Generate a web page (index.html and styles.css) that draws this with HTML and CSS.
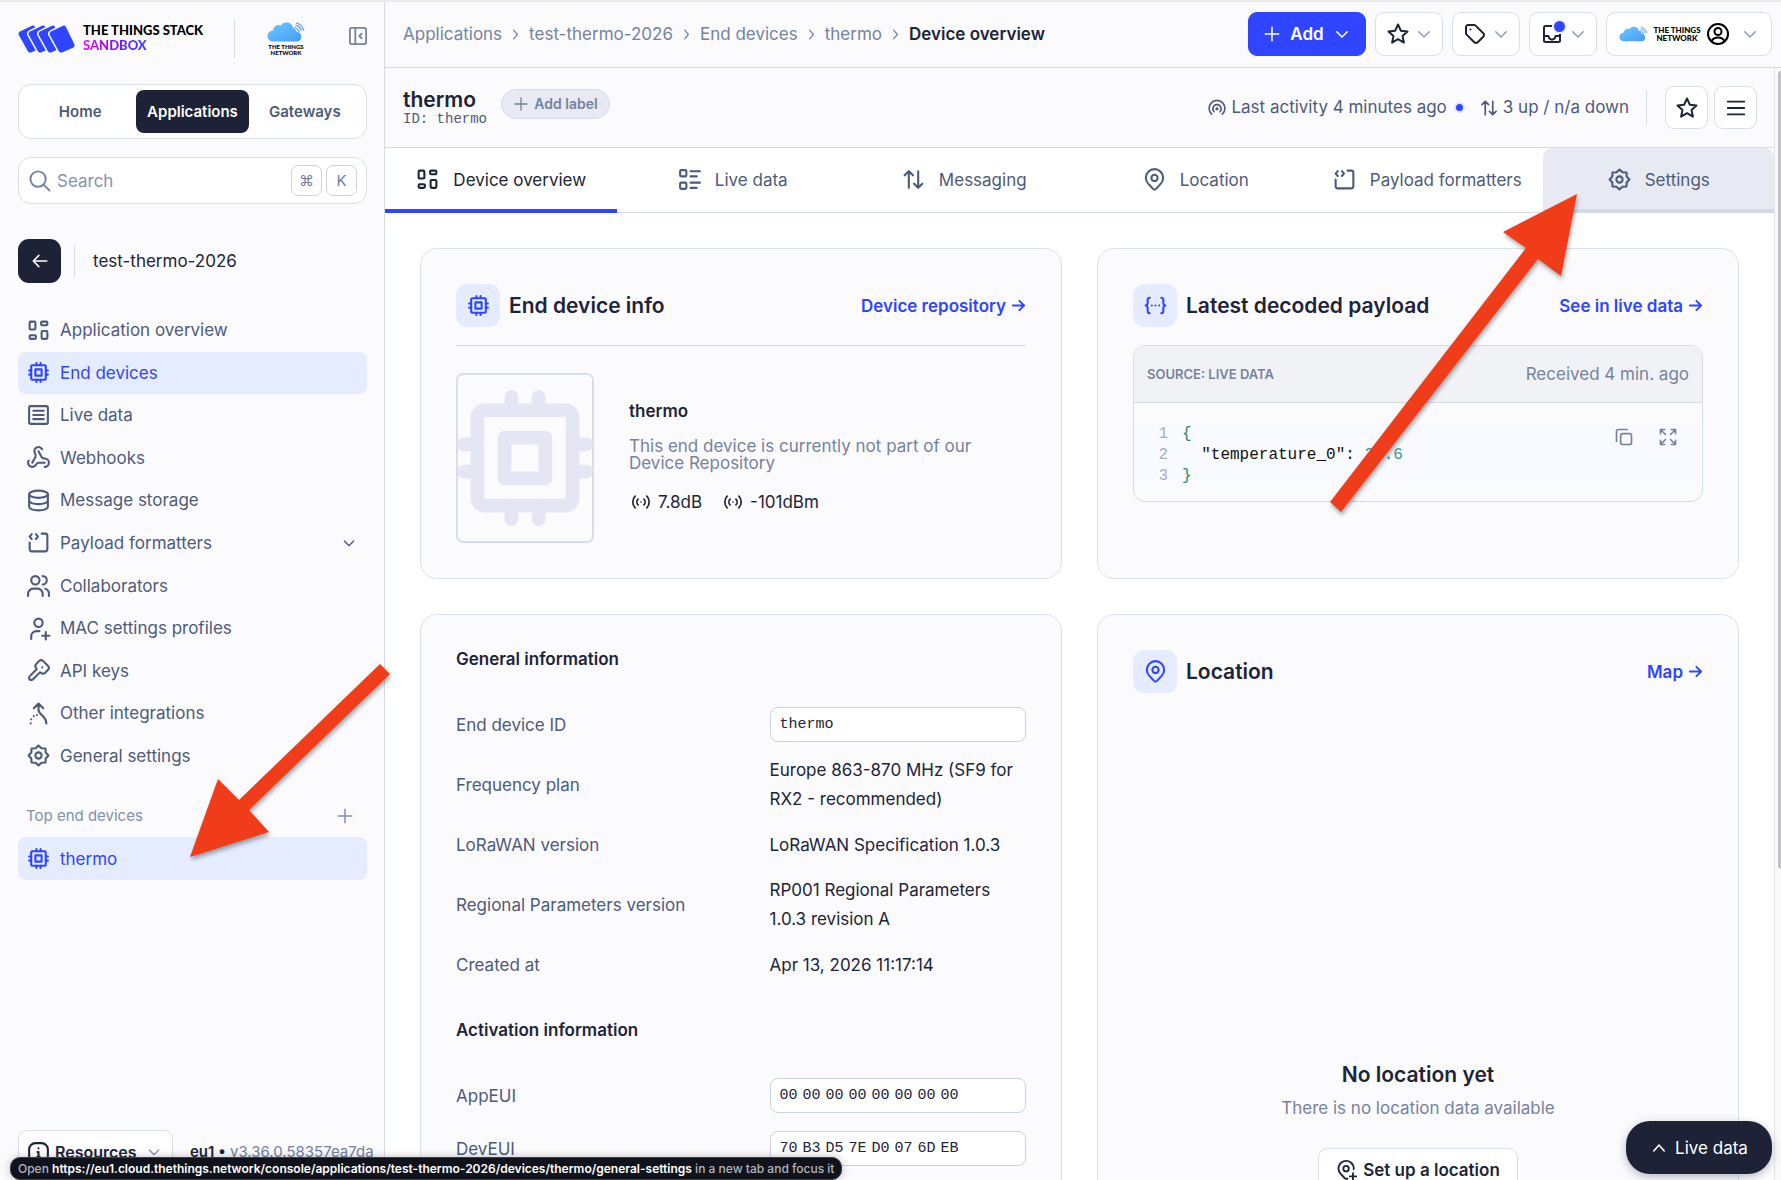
FILE: index.html
```html
<!DOCTYPE html>
<html lang="en">
<head>
    <meta charset="UTF-8">
    <meta name="viewport" content="width=device-width, initial-scale=1.0">
    <title>Device overview - thermo - The Things Stack Sandbox</title>
    <link rel="stylesheet" href="styles.css">
</head>
<body>
    <!-- Icon set -->
    <svg class="sprite" aria-hidden="true">
        <symbol id="i-overview" viewBox="0 0 24 24"><rect x="3.500" y="3.500" width="5.500" height="7.500" rx="1"/><rect x="14.500" y="3.500" width="6" height="3.500" rx="1"/><rect x="3.500" y="16.500" width="6" height="3.500" rx="1"/><rect x="15" y="12.500" width="5.500" height="7.500" rx="1"/></symbol>
        <symbol id="i-chip" viewBox="0 0 24 24"><rect x="5" y="5" width="14" height="14" rx="1"/><rect x="9" y="9" width="6" height="6"/><path d="M10 3v2M14 3v2M10 19v2M14 19v2M3 10h2M3 14h2M19 10h2M19 14h2"/></symbol>
        <symbol id="i-list" viewBox="0 0 24 24"><rect x="3" y="3" width="18" height="17" rx="1.5"/><path d="M7 7.500h10M7 11.500h10M7 15.500h10"/></symbol>
        <symbol id="i-webhook" viewBox="0 0 24 24"><path d="M18 16.980h-5.990c-1.100 0-1.950.940-2.480 1.900A4 4 0 0 1 2 17c.010-.700.200-1.400.570-2"/><path d="m6 17 3.130-5.780c.530-.970.100-2.180-.500-3.100a4 4 0 1 1 6.890-4.060"/><path d="m12 6 3.130 5.730C15.660 12.700 16.900 13 18 13a4 4 0 0 1 0 8"/></symbol>
        <symbol id="i-database" viewBox="0 0 24 24"><ellipse cx="12" cy="6" rx="9" ry="3.500"/><path d="M3 6v12c0 2 4 3.500 9 3.500s9-1.500 9-3.500V6M3 12c0 2 4 3.500 9 3.500s9-1.500 9-3.500"/></symbol>
        <symbol id="i-source" viewBox="0 0 24 24"><path d="M15 3.500h3.500a2 2 0 0 1 2 2v13a2 2 0 0 1-2 2h-13a2 2 0 0 1-2-2V12"/><path d="M5.500 4L3.500 6.300l2 2.300M9.500 4l2 2.300-2 2.300"/></symbol>
        <symbol id="i-users" viewBox="0 0 24 24"><circle cx="9" cy="7" r="4"/><path d="M2 22v-2a5 5 0 0 1 5-5h4a5 5 0 0 1 5 5v2M16 3a4 4 0 0 1 0 8M22 22v-2a5 5 0 0 0-3.500-4.800"/></symbol>
        <symbol id="i-user-plus" viewBox="0 0 24 24"><circle cx="12" cy="6.500" r="4"/><path d="M5 22v-2.500a5 5 0 0 1 5-5h3M19 15.500v7M15.500 19h7"/></symbol>
        <symbol id="i-key" viewBox="0 0 24 24"><path d="M16.600 3l4.400 4.400a2.900 2.900 0 0 1 0 4.100l-2.600 2.600a2.900 2.900 0 0 1-4.100 0l-.9-.3-6.600 6.600a2 2 0 0 1-1.400.6H4a1 1 0 0 1-1-1v-1.200a2 2 0 0 1 .6-1.400l6.600-6.600-.3-1a2.900 2.900 0 0 1 0-4.100L12.500 3a2.900 2.900 0 0 1 4.100 0z"/><path d="M15.500 9h.010"/></symbol>
        <symbol id="i-merge" viewBox="0 0 24 24"><path d="M12 3v5.500c0 5 7.500 5.500 7.500 13M7.500 7L12 2.500 16.500 7M10.500 13.500v.010M7.500 14.500v.010M5 17.500v.010M4.500 21.500v.010"/></symbol>
        <symbol id="i-gear" viewBox="0 0 24 24"><path d="M12 2.500L14.900 5.100 18.700 5.300 18.900 9.100 21.500 12 18.900 14.900 18.700 18.700 14.900 18.900 12 21.500 9.100 18.900 5.300 18.700 5.100 14.900 2.500 12 5.100 9.100 5.300 5.300 9.100 5.100Z"/><circle cx="12" cy="12" r="3"/></symbol>
        <symbol id="i-plus" viewBox="0 0 24 24"><path d="M12 3v18M3 12h18"/></symbol>
        <symbol id="i-down" viewBox="0 0 24 24"><path d="M5 9l7 7 7-7"/></symbol>
        <symbol id="i-up" viewBox="0 0 24 24"><path d="M5 16l7-8 7 8"/></symbol>
        <symbol id="i-right" viewBox="0 0 24 24"><path d="M9 5l6 7-6 7"/></symbol>
        <symbol id="i-arrow-left" viewBox="0 0 24 24"><path d="M21 12H3M10.500 4.500L3 12l7.500 7.500"/></symbol>
        <symbol id="i-arrow-right" viewBox="0 0 24 24"><path d="M3 12h18M13.500 4.500L21 12l-7.500 7.500"/></symbol>
        <symbol id="i-search" viewBox="0 0 24 24"><circle cx="10.500" cy="10.500" r="8"/><path d="M16.500 16.500l6 6"/></symbol>
        <symbol id="i-collapse" viewBox="2 2 20 20"><rect x="3" y="3" width="18" height="18" rx="2"/><path d="M9 3v18M16 9.500L13.500 12l2.500 2.500"/></symbol>
        <symbol id="i-star" viewBox="0 0 24 24"><path d="M12 2.500l2.800 6.200 6.700.7-5 4.500 1.400 6.700-5.900-3.400-5.900 3.400 1.400-6.700-5-4.500 6.700-.7z"/></symbol>
        <symbol id="i-tag" viewBox="0 0 24 24"><path d="M3 5v6.200a2 2 0 0 0 .6 1.400l7.700 7.700a2.400 2.400 0 0 0 3.400 0l5.600-5.600a2.400 2.400 0 0 0 0-3.400l-7.700-7.700a2 2 0 0 0-1.400-.6H5a2 2 0 0 0-2 2z"/><path d="M7.500 7.500h.010"/></symbol>
        <symbol id="i-inbox" viewBox="0 0 24 24"><path d="M12 4H5.500a1.500 1.500 0 0 0-1.500 1.500v13a1.500 1.500 0 0 0 1.500 1.500h13a1.500 1.500 0 0 0 1.500-1.500V12M4 14h4.500a3.500 3.500 0 0 0 7 0H20"/></symbol>
        <symbol id="i-user" viewBox="0 0 24 24"><circle cx="12" cy="12" r="10"/><circle cx="12" cy="9.500" r="3.500"/><path d="M5.500 19c1.500-2.500 4-3.500 6.500-3.500s5 1 6.500 3.500"/></symbol>
        <symbol id="i-broadcast" viewBox="0 0 24 24"><path d="M18.400 19.400a9.500 9.500 0 1 0-12.800 0M15.500 16.500a5 5 0 1 0-7 0"/><circle cx="12" cy="13" r="1"/></symbol>
        <symbol id="i-signal" viewBox="0 0 24 24"><path d="M12 12v.010M15.500 8.500a5 5 0 0 1 0 7M19 5a10 10 0 0 1 0 14M8.500 15.500a5 5 0 0 1 0-7M5 19a10 10 0 0 1 0-14"/></symbol>
        <symbol id="i-updown" viewBox="0 0 24 24"><path d="M7.500 20V4M3.500 8l4-4 4 4M16.500 4v16M12.500 16l4 4 4-4"/></symbol>
        <symbol id="i-menu" viewBox="0 0 24 24"><path d="M3 5h18M3 12h18M3 19h18"/></symbol>
        <symbol id="i-details" viewBox="0 0 24 24"><path d="M13 4h9M13 9h6M13 15h9M13 20h6"/><rect x="3" y="3" width="6" height="6" rx="1"/><rect x="3" y="15" width="6" height="6" rx="1"/></symbol>
        <symbol id="i-pin" viewBox="0 0 24 24"><circle cx="12" cy="10.500" r="3"/><path d="M17.900 16.200l-4.500 4.800a2 2 0 0 1-2.800 0l-4.500-4.800a8.300 8.300 0 1 1 11.800 0z"/></symbol>
        <symbol id="i-pin-plus" viewBox="0 0 24 24"><circle cx="11" cy="10.500" r="3"/><path d="M12.500 21.300a2 2 0 0 1-2.800-.3l-4.600-4.800a8.300 8.300 0 1 1 14.200-5M18.500 15.500v7M15 19h7"/></symbol>
        <symbol id="i-json" viewBox="0 0 24 24"><path d="M6.500 4.500C4 4.500 4.500 7 4.500 9S4 12 2.500 12c1.500 0 2 1 2 3s-.5 4.500 2 4.500M17.500 4.500c2.500 0 2 2.500 2 4.500s.5 3 2 3c-1.500 0-2 1-2 3s.5 4.500-2 4.500M8.500 12v.010M12 12v.010M15.500 12v.010"/></symbol>
        <symbol id="i-copy" viewBox="0 0 24 24"><rect x="8" y="8" width="13" height="13" rx="2.500"/><path d="M3 17V5a2 2 0 0 1 2-2h11"/></symbol>
        <symbol id="i-expand" viewBox="0 0 24 24"><path d="M3 8V3h5M3 3l6 6M16 3h5v5M21 3l-6 6M8 21H3v-5M3 21l6-6M21 16v5h-5M21 21l-6-6"/></symbol>
        <symbol id="i-info" viewBox="0 0 24 24"><rect x="3" y="3" width="18" height="18" rx="6"/><path d="M12 8v.010M11 11.500h1V16M11 16h2"/></symbol>
        <linearGradient id="sky" x1="0" y1="0" x2="1" y2="1"><stop offset="0" stop-color="#6cc8ff"/><stop offset="1" stop-color="#459cf8"/></linearGradient>
        <symbol id="i-cloud" viewBox="0 0 38 20"><path d="M6 19.500a5.500 5.500 0 0 1 0-11 5.500 5.500 0 0 1 7.500-5A7 7 0 0 1 26 5.500a5.500 5.500 0 0 1 3.500 4.300A5 5 0 0 1 31 19.500z" fill="url(#sky)" stroke="none"/><path d="M28 5.500q3 1 4 4M29 3.200q4 1.300 5.300 5M29.500 1q5.200 1.500 7.200 7" stroke="#459cf8" stroke-width="1.200" fill="none"/></symbol>
        <symbol id="i-tile" viewBox="-2 -2 30 32"><path d="M2 6.500L14 .7q2-.7 3 1.300l8.500 17.500q.5 2-1 3L13 27.500q-2 .5-3-1L.6 9.500Q0 7.500 2 6.500z"/></symbol>
    </svg>

    <aside class="sidebar">
        <div class="brand">
            <svg class="brand-mark" viewBox="0 0 57 28" aria-hidden="true">
                <use href="#i-tile" x="-2" y="-2" width="30" height="32"/>
                <use href="#i-tile" x="8" y="-2" width="30" height="32"/>
                <use href="#i-tile" x="18" y="-2" width="30" height="32"/>
                <use href="#i-tile" x="29" y="-2" width="30" height="32"/>
            </svg>
            <div class="brand-name">
                <span>THE THINGS STACK</span>
                <span class="sandbox">SANDBOX</span>
            </div>
            <div class="brand-network">
                <svg class="cloud" aria-hidden="true"><use href="#i-cloud"/></svg>
                <span>THE THINGS</span>
                <span>NETWORK</span>
            </div>
            <button class="collapse" aria-label="Collapse sidebar"><svg><use href="#i-collapse"/></svg></button>
        </div>

        <nav class="switcher">
            <a href="#">Home</a>
            <a href="#" class="active">Applications</a>
            <a href="#">Gateways</a>
        </nav>

        <label class="search">
            <svg class="icon"><use href="#i-search"/></svg>
            <input type="text" placeholder="Search" aria-label="Search">
            <kbd>⌘</kbd>
            <kbd>K</kbd>
        </label>

        <div class="app-title">
            <button class="back" aria-label="Back"><svg class="icon-sm"><use href="#i-arrow-left"/></svg></button>
            <span>test-thermo-2026</span>
        </div>

        <ul class="nav">
            <li><a href="#"><svg class="icon"><use href="#i-overview"/></svg>Application overview</a></li>
            <li><a href="#" class="active"><svg class="icon"><use href="#i-chip"/></svg>End devices</a></li>
            <li><a href="#"><svg class="icon"><use href="#i-list"/></svg>Live data</a></li>
            <li><a href="#"><svg class="icon"><use href="#i-webhook"/></svg>Webhooks</a></li>
            <li><a href="#"><svg class="icon"><use href="#i-database"/></svg>Message storage</a></li>
            <li><a href="#"><svg class="icon"><use href="#i-source"/></svg>Payload formatters<svg class="icon-sm more"><use href="#i-down"/></svg></a></li>
            <li><a href="#"><svg class="icon"><use href="#i-users"/></svg>Collaborators</a></li>
            <li><a href="#"><svg class="icon"><use href="#i-user-plus"/></svg>MAC settings profiles</a></li>
            <li><a href="#"><svg class="icon"><use href="#i-key"/></svg>API keys</a></li>
            <li><a href="#"><svg class="icon"><use href="#i-merge"/></svg>Other integrations</a></li>
            <li><a href="#"><svg class="icon"><use href="#i-gear"/></svg>General settings</a></li>
        </ul>

        <div class="nav-heading">
            <span>Top end devices</span>
            <button aria-label="Add end device"><svg class="icon-sm"><use href="#i-plus"/></svg></button>
        </div>
        <ul class="nav nav-top">
            <li><a href="#" class="active"><svg class="icon"><use href="#i-chip"/></svg>thermo</a></li>
        </ul>

        <footer class="sidebar-footer">
            <button class="resources"><svg class="icon"><use href="#i-info"/></svg>Resources<svg class="icon-sm"><use href="#i-down"/></svg></button>
            <span class="version"><b>eu1 •</b> v3.36.0.58357ea7da</span>
        </footer>
    </aside>

    <div class="page">
        <header class="topbar">
            <nav class="breadcrumbs">
                <a href="#">Applications</a>
                <svg><use href="#i-right"/></svg>
                <a href="#">test-thermo-2026</a>
                <svg><use href="#i-right"/></svg>
                <a href="#">End devices</a>
                <svg><use href="#i-right"/></svg>
                <a href="#">thermo</a>
                <svg><use href="#i-right"/></svg>
                <span>Device overview</span>
            </nav>
            <div class="actions">
                <button class="btn btn-add"><svg class="icon-sm"><use href="#i-plus"/></svg>Add<svg class="icon-sm"><use href="#i-down"/></svg></button>
                <button class="btn" aria-label="Bookmarks"><svg class="icon"><use href="#i-star"/></svg><svg class="icon-sm caret"><use href="#i-down"/></svg></button>
                <button class="btn" aria-label="Labels"><svg class="icon"><use href="#i-tag"/></svg><svg class="icon-sm caret"><use href="#i-down"/></svg></button>
                <button class="btn btn-inbox" aria-label="Notifications"><svg class="icon"><use href="#i-inbox"/></svg><svg class="icon-sm caret"><use href="#i-down"/></svg></button>
                <button class="btn btn-profile" aria-label="Profile">
                    <svg class="cloud"><use href="#i-cloud"/></svg>
                    <span class="network"><span>THE THINGS</span><span>NETWORK</span></span>
                    <svg class="icon"><use href="#i-user"/></svg>
                    <svg class="icon-sm caret"><use href="#i-down"/></svg>
                </button>
            </div>
        </header>

        <div class="scroll">
            <main class="content">
                <div class="device-header">
                    <div class="device-name">
                        <h1>thermo</h1>
                        <p>ID: thermo</p>
                    </div>
                    <button class="add-label"><svg><use href="#i-plus"/></svg>Add label</button>
                    <div class="status">
                        <span class="status-item"><svg><use href="#i-broadcast"/></svg>Last activity 4 minutes ago<i class="dot"></i></span>
                        <span class="status-item"><svg><use href="#i-updown"/></svg>3 up / n/a down</span>
                    </div>
                    <div class="device-actions">
                        <button class="btn" aria-label="Bookmark"><svg class="icon"><use href="#i-star"/></svg></button>
                        <button class="btn" aria-label="Menu"><svg class="icon-md"><use href="#i-menu"/></svg></button>
                    </div>
                </div>

                <nav class="tabs">
                    <a href="#" class="active"><svg class="icon"><use href="#i-overview"/></svg>Device overview</a>
                    <a href="#"><svg class="icon"><use href="#i-details"/></svg>Live data</a>
                    <a href="#"><svg class="icon"><use href="#i-updown"/></svg>Messaging</a>
                    <a href="#"><svg class="icon"><use href="#i-pin"/></svg>Location</a>
                    <a href="#"><svg class="icon"><use href="#i-source"/></svg>Payload formatters</a>
                    <a href="#" class="hovered"><svg class="icon"><use href="#i-gear"/></svg>Settings</a>
                </nav>

                <div class="cards">
                    <section class="card">
                        <div class="card-header">
                            <span class="badge"><svg class="icon"><use href="#i-chip"/></svg></span>
                            <h2>End device info</h2>
                            <a href="#">Device repository<svg><use href="#i-arrow-right"/></svg></a>
                        </div>
                        <div class="device-info">
                            <div class="device-image"><svg viewBox="2 2 20 20"><use href="#i-chip" width="24" height="24"/></svg></div>
                            <div class="device-text">
                                <h3>thermo</h3>
                                <p>This end device is currently not part of our Device Repository</p>
                                <div class="signals">
                                    <span><svg><use href="#i-signal"/></svg>7.8dB</span>
                                    <span><svg><use href="#i-signal"/></svg>-101dBm</span>
                                </div>
                            </div>
                        </div>
                    </section>

                    <section class="card">
                        <div class="card-header">
                            <span class="badge"><svg class="icon"><use href="#i-json"/></svg></span>
                            <h2>Latest decoded payload</h2>
                            <a href="#">See in live data<svg><use href="#i-arrow-right"/></svg></a>
                        </div>
                        <div class="payload">
                            <div class="payload-header">
                                <span class="source">SOURCE: LIVE DATA</span>
                                <span>Received 4 min. ago</span>
                            </div>
                            <div class="payload-body">
                                <ol class="code">
                                    <li><span class="brace">{</span></li>
                                    <li>  "temperature_0": <span class="number">23.6</span></li>
                                    <li><span class="brace">}</span></li>
                                </ol>
                                <div class="code-actions">
                                    <button aria-label="Copy"><svg><use href="#i-copy"/></svg></button>
                                    <button aria-label="Expand"><svg><use href="#i-expand"/></svg></button>
                                </div>
                            </div>
                        </div>
                    </section>

                    <section class="card">
                        <h3 class="group-title">General information</h3>
                        <div class="field">
                            <label for="device-id">End device ID</label>
                            <input class="value-box" type="text" id="device-id" value="thermo" readonly>
                        </div>
                        <div class="field field-tall"><span>Frequency plan</span><span class="value">Europe 863-870 MHz (SF9 for RX2 - recommended)</span></div>
                        <div class="field field-tall"><span>LoRaWAN version</span><span class="value">LoRaWAN Specification 1.0.3</span></div>
                        <div class="field field-tall"><span>Regional Parameters version</span><span class="value">RP001 Regional Parameters 1.0.3 revision A</span></div>
                        <div class="field field-tall"><span>Created at</span><span class="value">Apr 13, 2026 11:17:14</span></div>
                        <h3 class="group-title">Activation information</h3>
                        <div class="field">
                            <label for="app-eui">AppEUI</label>
                            <output class="value-box" id="app-eui"><span>00</span> <span>00</span> <span>00</span> <span>00</span> <span>00</span> <span>00</span> <span>00</span> <span>00</span></output>
                        </div>
                        <div class="field">
                            <label for="dev-eui">DevEUI</label>
                            <output class="value-box" id="dev-eui"><span>70</span> <span>B3</span> <span>D5</span> <span>7E</span> <span>D0</span> <span>07</span> <span>6D</span> <span>EB</span></output>
                        </div>
                    </section>

                    <section class="card">
                        <div class="card-header">
                            <span class="badge"><svg class="icon"><use href="#i-pin"/></svg></span>
                            <h2>Location</h2>
                            <a href="#">Map<svg><use href="#i-arrow-right"/></svg></a>
                        </div>
                        <div class="no-location">
                            <h2>No location yet</h2>
                            <p>There is no location data available</p>
                            <button class="btn"><svg class="icon-md"><use href="#i-pin-plus"/></svg>Set up a location</button>
                        </div>
                    </section>
                </div>
            </main>
            <div class="scrollbar"><div class="thumb"></div></div>
        </div>
    </div>

    <button class="live-data"><svg class="icon-sm"><use href="#i-up"/></svg>Live data</button>
    <div class="link-status">Open <b>https://eu1.cloud.thethings.network/console/applications/test-thermo-2026/devices/thermo/general-settings</b> in a new tab and focus it</div>

    <!-- Pointers to the device and its settings -->
    <svg class="pointer pointer-device" viewBox="0 0 200 194" aria-hidden="true"><path d="M0 193L28 115 49 136 190 0 200 10 59 146 79 168Z"/></svg>
    <svg class="pointer pointer-settings" viewBox="0 0 248 318" aria-hidden="true"><path d="M247 0L173 38 196 54 0 308 11 318 208 65 231 82Z"/></svg>
</body>
</html>
```
FILE: styles.css
```css
* {
    margin: 0;
    padding: 0;
    box-sizing: border-box;
}

body {
    display: flex;
    height: 100vh;
    overflow: hidden;
    position: relative;
    border-top: 2px solid #ececf0;
    font-family: Inter, "Liberation Sans", sans-serif;
    font-size: 17px;
    line-height: 24px;
    color: #1d2438;
    background: #fff;
}

a {
    color: inherit;
    text-decoration: none;
}

ul, ol {
    list-style: none;
}

button, input {
    font: inherit;
    color: inherit;
}

button {
    background: none;
    border: none;
    cursor: pointer;
}

svg {
    flex: none;
    fill: none;
    stroke: currentColor;
    stroke-width: 2;
    stroke-linecap: round;
    stroke-linejoin: round;
}

.sprite {
    position: absolute;
    width: 0;
    height: 0;
}

.icon {
    width: 25px;
    height: 25px;
}

.icon-md {
    width: 22px;
    height: 22px;
}

.icon-sm {
    width: 18px;
    height: 18px;
}

/* Sidebar */
.sidebar {
    width: 385px;
    flex: none;
    display: flex;
    flex-direction: column;
    padding: 17px 17px 0 18px;
    background: #fbfbfe;
    border-right: 1px solid #d3dae8;
}

.brand {
    display: flex;
    align-items: center;
    height: 39px;
}

.brand-mark {
    width: 57px;
    height: 28px;
    fill: #2f45ff;
    stroke: #fbfbfe;
    stroke-width: 3;
    paint-order: stroke;
}

.brand-name {
    display: flex;
    flex-direction: column;
    align-items: flex-start;
    width: 152px;
    height: 39px;
    margin-left: 8px;
    padding-top: 4px;
    border-right: 1px solid #d3dae8;
    font-family: Lato, "Liberation Sans", sans-serif;
    font-size: 13px;
    font-weight: 900;
    line-height: 15px;
    color: #000;
}

.sandbox {
    background: linear-gradient(90deg, #f010e8, #8010ff 50%, #3045ff);
    background-clip: text;
    color: transparent;
}

.brand-network {
    display: flex;
    flex-direction: column;
    align-items: center;
    margin-left: 32px;
    font-family: Lato, "Liberation Sans", sans-serif;
    font-size: 6px;
    font-weight: 900;
    line-height: 6px;
    color: #000;
}

.brand-network .cloud {
    width: 38px;
    height: 20px;
    margin-bottom: 2px;
}

.collapse {
    margin: 0 0 5px auto;
    color: #76829f;
}

.collapse svg {
    display: block;
    width: 18px;
    height: 18px;
}

.switcher {
    display: flex;
    margin-top: 26px;
    padding: 5px;
    height: 55px;
    background: #fff;
    border: 1px solid #d8deea;
    border-radius: 13px;
    font-size: 15px;
    font-weight: 600;
    color: #4e5a79;
}

.switcher a {
    flex: 1;
    display: flex;
    align-items: center;
    justify-content: center;
    border-radius: 8px;
}

.switcher .active {
    background: #1d2237;
    color: #fff;
}

.search {
    display: flex;
    align-items: center;
    height: 47px;
    margin-top: 18px;
    padding: 0 9px;
    background: #fff;
    border: 1px solid #d8deea;
    border-radius: 13px;
    color: #76829f;
}

.search .icon {
    width: 23px;
    height: 23px;
}

.search input {
    flex: 1;
    min-width: 0;
    margin-left: 6px;
    border: none;
    outline: none;
    background: none;
}

.search input::placeholder {
    color: #8792ab;
}

.search kbd {
    display: flex;
    align-items: center;
    justify-content: center;
    width: 31px;
    height: 31px;
    margin-left: 4px;
    border: 1px solid #ccd3e0;
    border-radius: 7px;
    font-family: inherit;
    font-size: 15px;
}

.app-title {
    display: flex;
    align-items: center;
    margin-top: 35px;
}

.app-title span {
    margin-left: 13px;
    padding-left: 18px;
    line-height: 33px;
    border-left: 1px solid #d3dae8;
}

.back {
    display: flex;
    align-items: center;
    justify-content: center;
    width: 43px;
    height: 44px;
    border-radius: 11px;
    background: #1d2237;
    color: #fff;
}

.nav {
    display: grid;
    grid-auto-rows: 1fr;
    height: 468px;
    margin-top: 26px;
    color: #4e5a79;
}

.nav-top {
    height: 43px;
    margin-top: 9px;
}

.nav a {
    display: flex;
    align-items: center;
    gap: 9px;
    height: 100%;
    padding: 0 8px;
    border-radius: 8px;
}

.nav .active {
    background: #e5ecff;
    color: #2f45ff;
}

.nav .more {
    width: 16px;
    height: 16px;
    margin: 0 2px 0 auto;
}

.nav-heading {
    display: flex;
    align-items: center;
    justify-content: space-between;
    margin-top: 27px;
    padding: 0 13px 0 8px;
    font-size: 15px;
    color: #8390aa;
}

.nav-heading button {
    height: 18px;
}

.sidebar-footer {
    display: flex;
    align-items: center;
    margin-top: auto;
    padding-bottom: 6px;
    white-space: nowrap;
}

.resources {
    display: flex;
    flex: none;
    align-items: center;
    gap: 4px;
    width: 155px;
    height: 44px;
    padding: 0 10px 0 7px;
    background: #fff;
    border: 1px solid #d8deea;
    border-radius: 9px;
    font-size: 16px;
    font-weight: 600;
}

.resources .icon-sm {
    width: 16px;
    height: 16px;
    margin-left: auto;
    color: #8792ab;
}

.version {
    margin-left: 17px;
    font-size: 15px;
    color: #76829f;
}

.version b {
    font-weight: 600;
    color: #1d2438;
}

/* Top bar */
.page {
    flex: 1;
    min-width: 0;
    display: flex;
    flex-direction: column;
}

.topbar {
    display: flex;
    align-items: center;
    justify-content: space-between;
    height: 66px;
    flex: none;
    padding: 0 9px 1px 18px;
    background: #fbfbfe;
    border-bottom: 1px solid #d3dae8;
}

.breadcrumbs {
    display: flex;
    align-items: center;
    gap: 6px;
    color: #76829f;
}

.breadcrumbs svg {
    width: 15px;
    height: 15px;
}

.breadcrumbs span {
    font-weight: 600;
    color: #1d2438;
}

.actions {
    display: flex;
    gap: 9px;
}

.btn {
    position: relative;
    display: flex;
    align-items: center;
    justify-content: center;
    gap: 5px;
    width: 68px;
    height: 44px;
    background: #fff;
    border: 1px solid #d8deea;
    border-radius: 9px;
}

.btn .icon {
    width: 24px;
    height: 24px;
}

.caret {
    color: #8f9bb5;
}

.btn-add {
    width: 118px;
    gap: 9px;
    background: #2f45ff;
    border-color: #2f45ff;
    font-weight: 600;
    color: #fff;
}

.btn-inbox::after {
    content: "";
    position: absolute;
    top: 8px;
    left: 24px;
    width: 11px;
    height: 11px;
    border-radius: 50%;
    background: #2f45ff;
    box-shadow: 0 0 0 2px #edf0fb;
}

.btn-profile {
    width: 166px;
    color: #000;
}

.btn-profile .cloud {
    width: 29px;
    height: 16px;
}

.btn-profile .caret {
    margin-left: 6px;
}

.network {
    display: flex;
    flex-direction: column;
    width: 48px;
    font-family: Lato, "Liberation Sans", sans-serif;
    font-size: 8px;
    font-weight: 900;
    line-height: 8px;
}

/* Scrolling page */
.scroll {
    flex: 1;
    min-height: 0;
    display: flex;
    overflow: hidden;
}

.content {
    flex: 1;
    min-width: 0;
}

.scrollbar {
    width: 7px;
    padding: 3px 0 0 3px;
    background: #fafafa;
    border-left: 1px solid #e4e4e8;
}

.thumb {
    height: 72%;
    background: #c1c1c4;
    border-radius: 3px 0 0 3px;
}

.device-header {
    display: flex;
    align-items: center;
    height: 80px;
    padding: 0 17px 0 18px;
    background: #fbfbfe;
    border-bottom: 1px solid #d3dae8;
}

.device-name h1 {
    font-size: 21px;
    font-weight: 600;
    line-height: 22px;
}

.device-name p {
    font-family: "Liberation Mono", monospace;
    font-size: 14px;
    line-height: 16px;
    color: #4e5a79;
}

.add-label {
    display: flex;
    align-items: center;
    justify-content: center;
    gap: 5px;
    width: 109px;
    height: 30px;
    margin: 0 0 8px 14px;
    background: #e7eaf3;
    border: 1px solid #d3dae8;
    border-radius: 15px;
    font-size: 14px;
    font-weight: 600;
    color: #76829f;
}

.add-label svg {
    width: 16px;
    height: 16px;
}

.status {
    display: flex;
    gap: 16px;
    margin-left: auto;
    padding-right: 17px;
    line-height: 35px;
    border-right: 1px solid #d3dae8;
    color: #4e5a79;
}

.status-item {
    display: flex;
    align-items: center;
    gap: 4px;
}

.status-item svg {
    width: 20px;
    height: 20px;
}

.dot {
    width: 7px;
    height: 7px;
    margin-left: 5px;
    border-radius: 50%;
    background: #2f45ff;
    box-shadow: 0 0 0 2px #dfe5ff;
}

.device-actions {
    display: flex;
    gap: 6px;
    margin-left: 18px;
}

.device-actions .btn {
    width: 43px;
    height: 43px;
}

.tabs {
    display: flex;
    height: 65px;
    border-bottom: 1px solid #d3dae8;
    color: #4e5a79;
}

.tabs a {
    flex: 1;
    display: flex;
    align-items: center;
    justify-content: center;
    gap: 13px;
    height: 65px;
    padding-top: 2px;
    border-bottom: 4px solid transparent;
}

.tabs .active {
    color: #1d2438;
    border-color: #2f45ff;
}

.tabs .hovered {
    background: #e7eaf3;
    border-color: #d5dae6;
    border-radius: 9px 9px 0 0;
}

/* Cards */
.cards {
    display: grid;
    grid-template-columns: 1fr 1fr;
    gap: 35px;
    padding: 35px;
}

.card {
    min-height: 331px;
    padding: 35px;
    background: #fbfbfe;
    border: 1px solid #dbe1ec;
    border-radius: 17px;
}

.card-header {
    display: flex;
    align-items: center;
    gap: 9px;
}

.badge {
    display: flex;
    align-items: center;
    justify-content: center;
    width: 44px;
    height: 43px;
    border-radius: 11px;
    background: #e5ecff;
    color: #2f45ff;
}

h2 {
    font-size: 21px;
    font-weight: 600;
    line-height: 28px;
}

h3 {
    font-size: 17px;
    font-weight: 600;
}

.card-header a {
    display: flex;
    align-items: center;
    gap: 5px;
    margin-left: auto;
    font-weight: 600;
    color: #2f45ff;
}

.card-header a svg {
    width: 15px;
    height: 15px;
    stroke-width: 3;
}

.device-info {
    display: flex;
    align-items: center;
    gap: 35px;
    margin-top: 18px;
    padding-top: 27px;
    border-top: 1px solid #d3dae8;
}

.device-image {
    display: flex;
    align-items: center;
    justify-content: center;
    width: 138px;
    height: 170px;
    border: 2px solid #d8dee9;
    border-radius: 7px;
    color: #e4e6f4;
}

.device-image svg {
    width: 136px;
    height: 136px;
}

.device-text {
    flex: 1;
    padding-bottom: 4px;
}

.device-text p {
    margin: 15px 0 18px;
    line-height: 17px;
    color: #76829f;
}

.signals {
    display: flex;
    gap: 19px;
}

.signals span {
    display: flex;
    align-items: center;
    gap: 5px;
}

.signals svg {
    width: 24px;
    height: 20px;
}

.payload {
    margin-top: 18px;
    border: 1px solid #d3dde8;
    border-radius: 12px;
    overflow: hidden;
}

.payload-header {
    display: flex;
    align-items: center;
    justify-content: space-between;
    height: 57px;
    padding: 0 13px;
    background: #f1f2f6;
    border-bottom: 1px solid #d3dde8;
    color: #76829f;
}

.source {
    font-size: 13px;
    font-weight: 600;
}

.payload-body {
    position: relative;
    padding: 21px 0 14px;
}

.code {
    counter-reset: line;
    background: #f9faff;
    font-family: "Liberation Mono", monospace;
    font-size: 16px;
    line-height: 21px;
    color: #111;
}

.code li {
    counter-increment: line;
    white-space: pre;
}

.code li::before {
    content: counter(line);
    display: inline-block;
    width: 34px;
    margin-right: 14px;
    text-align: right;
    color: #a9aebf;
}

.brace {
    color: #2e8560;
}

.number {
    color: #36999a;
}

.code-actions {
    position: absolute;
    top: 24px;
    right: 24px;
    display: flex;
    gap: 24px;
    color: #76829f;
}

.code-actions button, .code-actions svg {
    display: block;
    width: 20px;
    height: 20px;
}

.group-title {
    margin: -4px 0 26px;
    line-height: 26px;
}

.field {
    display: grid;
    grid-template-columns: 55% 45%;
    align-items: center;
    min-height: 53px;
    color: #4e5a79;
}

.field-tall {
    min-height: 60px;
}

.field:not(.field-tall) + .field-tall {
    margin-top: 4px;
}

.field + .group-title {
    margin-top: 22px;
}

.value {
    line-height: 29px;
    color: #1d2438;
}

.value-box {
    display: flex;
    align-items: center;
    gap: 5px;
    width: 100%;
    height: 35px;
    padding: 0 9px;
    background: #fff;
    border: 1px solid #ccd3e0;
    border-radius: 8px;
    font-family: "Liberation Mono", monospace;
    font-size: 15px;
    color: #1d2438;
}

.no-location {
    display: flex;
    flex-direction: column;
    align-items: center;
    padding-top: 368px;
}

.no-location p {
    margin: 7px 0 28px;
    color: #76829f;
}

.no-location .btn {
    width: 200px;
    font-weight: 600;
}

/* Floating parts */
.live-data {
    position: absolute;
    right: 9px;
    bottom: 6px;
    display: flex;
    align-items: center;
    justify-content: center;
    gap: 7px;
    width: 146px;
    height: 53px;
    border-radius: 24px;
    background: #1d2237;
    box-shadow: 0 3px 10px rgba(29, 34, 55, 0.3);
    color: #fff;
}

.link-status {
    position: absolute;
    left: 10px;
    bottom: 0;
    padding: 0 7px;
    border: 1px solid #3b3f48;
    border-radius: 10px;
    background: #10131c;
    box-shadow: 0 0 8px rgba(0, 0, 0, 0.25);
    font-size: 12px;
    font-weight: 500;
    line-height: 21px;
    white-space: nowrap;
    color: #b4b6bc;
}

.link-status b {
    font-weight: 600;
    color: #fff;
}

.pointer {
    position: absolute;
    fill: #f03c19;
    stroke: none;
    overflow: visible;
    pointer-events: none;
    filter: drop-shadow(1px 3px 2px rgba(0, 0, 0, 0.35));
}

.pointer-device {
    top: 662px;
    left: 190px;
    width: 200px;
    height: 194px;
}

.pointer-settings {
    top: 192px;
    right: 203px;
    width: 248px;
    height: 318px;
}
```
